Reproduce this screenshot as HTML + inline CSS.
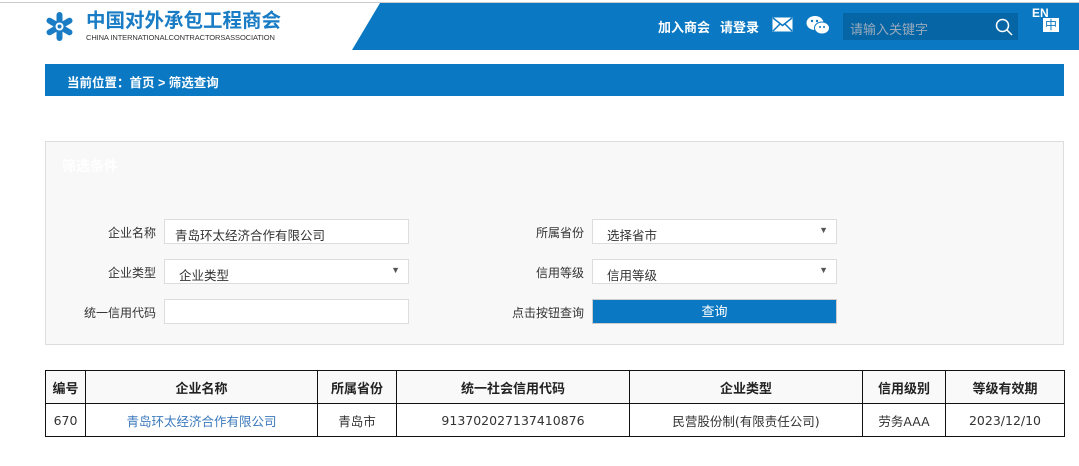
<!DOCTYPE html>
<html><head><meta charset="utf-8"><style>
*{margin:0;padding:0;box-sizing:border-box}
body{width:1079px;height:466px;background:#fff;position:relative;overflow:hidden;font-family:"Liberation Sans","Noto Sans CJK SC",sans-serif;font-size:12px;color:#333}
.abs{position:absolute}
.topline{left:0;top:2px;width:1079px;height:1px;background:#ccc}
.blue{left:352px;top:3px;width:727px;height:47px;background:#0a78c2;clip-path:polygon(28px 0,100% 0,100% 100%,0 100%)}
.logo-cn{left:86px;top:10px;font-size:19.5px;font-weight:bold;color:#1a7cc4;line-height:22px}
.logo-en{left:86px;top:33px;font-size:7.5px;color:#333;letter-spacing:-0.1px;white-space:nowrap}
.nav{color:#fff;font-weight:bold;font-size:13px;top:17px}
.search{left:843px;top:13px;width:175px;height:27px;background:#0565a5;color:#9ab;font-size:13px;padding:6px 7px}
.crumb{left:45px;top:64px;width:1019px;height:32px;background:#0a78c2;color:#fff;font-weight:bold;font-size:12.5px;padding:8px 22px}
.panel{left:45px;top:141px;width:1019px;height:204px;background:#f8f8f8;border:1px solid #ddd}
.lbl{font-size:12px;color:#333;text-align:right;width:120px}
.inp{background:#fff;border:1px solid #ddd;width:245px;height:25px;font-size:12.5px;color:#333;padding:5px 10px}
.arr{position:absolute;right:8px;top:5px;font-size:9px;color:#555}
.btn{left:592px;top:299px;width:245px;height:25px;background:#0a78c2;border:1px solid #ccc;color:#fff;text-align:center;line-height:23px;font-size:13px}
table{position:absolute;left:45px;top:370px;width:1020px;border-collapse:collapse}
td,th{border:1.5px solid #111;text-align:center;height:33px;font-size:13px}
td{font-family:"DejaVu Sans","Noto Sans CJK SC",sans-serif;font-size:12.5px}
th{background:#f9f9f9;font-weight:bold;color:#222}
td a{color:#3b79bc;text-decoration:none}
</style></head><body>
<div class="abs topline"></div>
<svg class="abs" style="left:45px;top:12px" width="29" height="29" viewBox="0 0 29 29">
<g stroke="#1a7cc4" stroke-width="6" stroke-linecap="round">
<line x1="14.5" y1="3" x2="14.5" y2="26"/><line x1="4.5" y1="8.7" x2="24.5" y2="20.3"/><line x1="4.5" y1="20.3" x2="24.5" y2="8.7"/></g>
<circle cx="14.5" cy="14.5" r="4" fill="#fff"/><circle cx="14.5" cy="14.5" r="2" fill="#1a7cc4"/>
</svg>
<div class="abs logo-cn">中国对外承包工程商会</div>
<div class="abs logo-en">CHINA INTERNATIONALCONTRACTORSASSOCIATION</div>
<div class="abs blue"></div>
<div class="abs nav" style="left:658px">加入商会</div>
<div class="abs nav" style="left:720px">请登录</div>
<svg class="abs" style="left:772px;top:17px" width="21" height="15" viewBox="0 0 21 15"><rect x="0.5" y="0.5" width="20" height="14" fill="#fff"/><path d="M1 1 L10.5 8.5 L20 1 M1 14 L8 7 M20 14 L13 7" stroke="#0a78c2" stroke-width="1.5" fill="none"/></svg>
<svg class="abs" style="left:806px;top:15px" width="24" height="20" viewBox="0 0 24 20"><ellipse cx="9" cy="8" rx="8.5" ry="7" fill="#fff"/><ellipse cx="16" cy="13" rx="7.5" ry="6" fill="#fff" stroke="#0a78c2" stroke-width="1"/><circle cx="6" cy="6" r="1.2" fill="#0a78c2"/><circle cx="11" cy="6" r="1.2" fill="#0a78c2"/><circle cx="14" cy="12" r="1" fill="#0a78c2"/><circle cx="18" cy="12" r="1" fill="#0a78c2"/></svg>
<div class="abs search">请输入关键字</div>
<svg class="abs" style="left:995px;top:18px" width="18" height="18" viewBox="0 0 18 18"><circle cx="7.5" cy="7.5" r="6" stroke="#fff" stroke-width="1.5" fill="none"/><line x1="12" y1="12" x2="17" y2="17" stroke="#fff" stroke-width="1.5"/></svg>
<div class="abs" style="left:1032px;top:6px;color:#fff;font-weight:bold;font-size:12px">EN</div>
<div class="abs" style="left:1043px;top:18px;width:16px;height:14px;background:#fff;color:#0a78c2;font-size:12px;line-height:14px;text-align:center">中</div>
<div class="abs crumb">当前位置：首页 &gt; 筛选查询</div>
<div class="abs panel"></div>
<div class="abs" style="left:62px;top:156px;color:#fff;font-weight:bold;font-size:14px">筛选条件</div>
<div class="abs lbl" style="left:36px;top:224px">企业名称</div>
<div class="abs inp" style="left:164px;top:219px">青岛环太经济合作有限公司</div>
<div class="abs lbl" style="left:36px;top:264px">企业类型</div>
<div class="abs inp" style="left:164px;top:259px;padding-left:14px">企业类型<span class="arr">▼</span></div>
<div class="abs lbl" style="left:36px;top:304px">统一信用代码</div>
<div class="abs inp" style="left:164px;top:299px"></div>
<div class="abs lbl" style="left:464px;top:224px">所属省份</div>
<div class="abs inp" style="left:592px;top:219px;padding-left:14px">选择省市<span class="arr">▼</span></div>
<div class="abs lbl" style="left:464px;top:264px">信用等级</div>
<div class="abs inp" style="left:592px;top:259px;padding-left:14px">信用等级<span class="arr">▼</span></div>
<div class="abs lbl" style="left:464px;top:304px">点击按钮查询</div>
<div class="abs btn">查询</div>
<table>
<tr><th style="width:40px">编号</th><th style="width:232px">企业名称</th><th style="width:79px">所属省份</th><th style="width:233px">统一社会信用代码</th><th style="width:233px">企业类型</th><th style="width:83px">信用级别</th><th>等级有效期</th></tr>
<tr><td>670</td><td><a>青岛环太经济合作有限公司</a></td><td>青岛市</td><td>913702027137410876</td><td>民营股份制(有限责任公司)</td><td>劳务AAA</td><td>2023/12/10</td></tr>
</table>
</body></html>
